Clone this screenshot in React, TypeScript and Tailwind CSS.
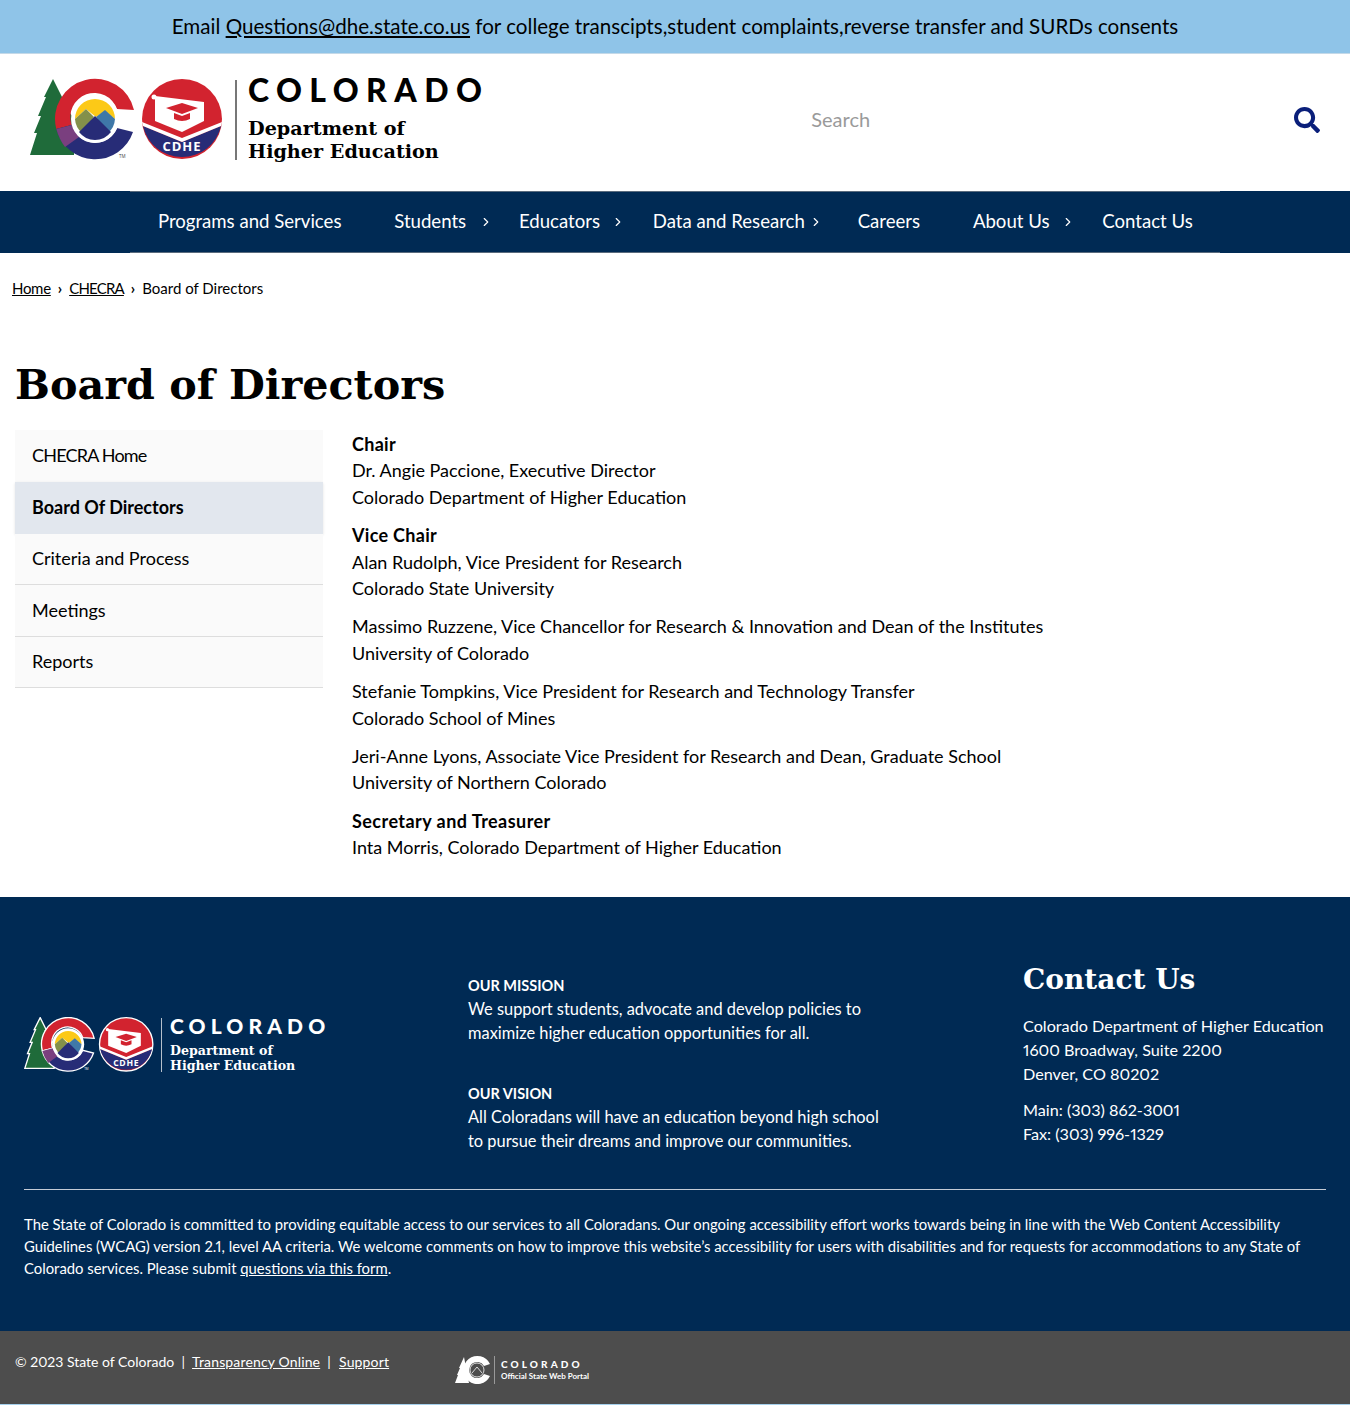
import { ChevronRight } from "lucide-react";
import { FaSearch } from "react-icons/fa";

const bodyFont = "font-['Lato',sans-serif]";
const slabFont = "font-['DejaVu_Serif',serif]";

const navItems = [
  { label: "Programs and Services", chevron: "" },
  { label: "Students", chevron: "right-0" },
  { label: "Educators", chevron: "right-[1px]" },
  { label: "Data and Research", chevron: "right-[8px]" },
  { label: "Careers", chevron: "" },
  { label: "About Us", chevron: "right-[1px]" },
  { label: "Contact Us", chevron: "" },
];

const sideItems = ["CHECRA Home", "Board Of Directors", "Criteria and Process", "Meetings", "Reports"];

// C + tree + CDHE seal, coordinates taken from the header logo
function LogoMark({ outline, className }: { outline?: boolean; className: string }) {
  const stroke = outline ? "#ffffff" : "none";
  const strokeWidth = outline ? 2 : 0;
  return (
    <svg viewBox="-1 -1 196 84" className={className} aria-hidden="true">
      <path
        d="M23 0 L33 20 L31 20 L44 40 L44 76 L0 76 L7 54 L4 54 L11 37 L8 37 L16 18 L14 18 Z"
        fill="#1f6b3a"
        stroke={stroke}
        strokeWidth={strokeWidth}
      />
      <path
        d="M104 31 A40 40 0 1 0 26.3 50 L41.7 46 A24 24 0 0 1 87 30 Z"
        fill="#d2232f"
        stroke={stroke}
        strokeWidth={strokeWidth}
      />
      <path
        d="M26.3 50 A40 40 0 0 0 103 53 L87 49 A24 24 0 0 1 41.7 46 Z"
        fill="#272c77"
        stroke={stroke}
        strokeWidth={strokeWidth}
      />
      <path d="M26.3 50 L41.7 46 L49 58 L35 68 Q29 60 26.3 50Z" fill="#7a3f7f" />
      <circle cx="65" cy="40" r="24" fill="#ffffff" />
      <path d="M45 40 A20 20 0 0 1 85 40 L75 32 L66 38 L56 30 Z" fill="#fcc917" />
      <path d="M45 40 L56 30 L64 38 L52 54 A20 20 0 0 1 45 40Z" fill="#84904a" />
      <path d="M85 40 L75 31 L66 38 L78 54 A20 20 0 0 0 85 40Z" fill="#3f78a8" />
      <path d="M65 37 L81 53 A20 20 0 0 1 49 53 Z" fill="#272c77" />
      <text x="89" y="79" fill={outline ? "#ffffff" : "#444444"} fontSize="4.5" fontFamily="'Open Sans',sans-serif">
        TM
      </text>
      <circle cx="152" cy="40" r="40" fill="#d2232f" stroke={stroke} strokeWidth={strokeWidth} />
      <path d="M113 47 L152 63 L191 47 A40 40 0 0 1 113 47Z" fill="#272c77" />
      <path d="M112 43 L152 59 L192 43 L191 47 L152 63 L113 47Z" fill="#ffffff" />
      <path d="M125 17 L174 23 L174 42 L152 53 L125 42 Z" fill="#ffffff" />
      <circle cx="124" cy="18" r="2.5" fill="#ffffff" />
      <path d="M136 29 L152 24 L168 29 L152 35 Z" fill="#d2232f" />
      <path d="M144 34 L152 37 L160 34 L160 40 Q152 44 144 40 Z" fill="#d2232f" />
      <text
        x="152"
        y="72"
        textAnchor="middle"
        fill="#ffffff"
        fontSize="13"
        fontWeight="700"
        fontFamily="'Open Sans',sans-serif"
        letterSpacing="1"
      >
        CDHE
      </text>
    </svg>
  );
}

function HeaderLogo() {
  return (
    <div className="flex items-center">
      <LogoMark className="h-[84px] w-[196px] shrink-0" />
      <div className="ml-[10px] h-[80px] w-[2px] bg-[#777777]" />
      <div className="ml-[11px] flex h-[84px] flex-col whitespace-nowrap text-black">
        <div className="font-['Lato',sans-serif] text-[32px] leading-[24px] font-black tracking-[7.4px]">COLORADO</div>
        <div className={`${slabFont} mt-[15px] text-[19.2px] leading-[23px] font-bold`}>
          Department of
          <br />
          Higher Education
        </div>
      </div>
    </div>
  );
}

function FooterLogo() {
  return (
    <div className="flex items-center text-white">
      <LogoMark outline className="h-[56px] w-[131px] shrink-0" />
      <div className="ml-[6px] h-[54px] w-px bg-[#b5bfcb]" />
      <div className="ml-[8px] flex flex-col whitespace-nowrap">
        <div className="font-['Lato',sans-serif] text-[21px] leading-[18px] font-black tracking-[5.1px]">COLORADO</div>
        <div className={`${slabFont} mt-[8px] text-[12.6px] leading-[15px] font-bold`}>
          Department of
          <br />
          Higher Education
        </div>
      </div>
    </div>
  );
}

function PortalLogo() {
  return (
    <div className="flex items-center text-white">
      <svg viewBox="0 0 36 30" className="h-[30px] w-[36px]" aria-hidden="true">
        <path d="M9 2 L14 28 L0 28 L3 20 L2 20 L5 13 L4 13 Z" fill="#ffffff" />
        <path d="M35 9 A14 14 0 1 0 35 21 L29 19 A8 8 0 1 1 29 11 Z" fill="#ffffff" />
        <circle cx="22" cy="15" r="7" fill="none" stroke="#ffffff" strokeWidth="0.8" />
        <path d="M17 18 L22 12 L27 18" fill="none" stroke="#ffffff" strokeWidth="0.8" />
      </svg>
      <div className="ml-[3px] h-[28px] w-px bg-[#999999]" />
      <div className="ml-[6px] flex flex-col whitespace-nowrap">
        <div className="font-['Lato',sans-serif] text-[10px] leading-[12px] font-black tracking-[3.1px]">COLORADO</div>
        <div className="mt-[1px] font-['Lato',sans-serif] text-[8px] leading-[11px] font-bold">
          Official State Web Portal
        </div>
      </div>
    </div>
  );
}

export default function App() {
  return (
    <div className={`${bodyFont} min-h-[1405px] bg-white text-black proportional-nums`}>
      <div className="flex h-[54px] items-center justify-center border-b border-[#c4d9e8] bg-[#8fc4e8] text-[20.6px]">
        <p>
          Email <a className="underline">Questions@dhe.state.co.us</a> for college transcipts,student complaints,reverse
          transfer and SURDs consents
        </p>
      </div>

      <header className="flex h-[137px] items-center pr-[30px] pb-[6px] pl-[29px]">
        <HeaderLogo />
        <div className="ml-[322px] flex flex-1 items-center justify-between">
          <span className="pb-[2px] text-[20px] text-[#9a9a9a]">Search</span>
          <FaSearch className="size-[26px] text-[#0a1f7a]" />
        </div>
      </header>

      <nav className="h-[62px] bg-[#002a54]">
        <ul className="mx-[130px] flex h-full border-y border-[#5a6b7d] pl-[1.5px]">
          {navItems.map((item) => (
            <li
              key={item.label}
              className="relative flex items-center px-[26.4px] text-[18.6px] whitespace-nowrap text-white"
            >
              {item.label}
              {item.chevron && <ChevronRight className={`absolute size-[14px] ${item.chevron}`} strokeWidth={2} />}
            </li>
          ))}
        </ul>
      </nav>

      <div className="flex gap-[7px] px-[12px] pt-[24px] text-[15px] leading-[22px]">
        <a className="tracking-[-0.3px] underline">Home</a>
        <span className="font-bold">›</span>
        <a className="tracking-[-0.8px] underline">CHECRA</a>
        <span className="font-bold">›</span>
        <span>Board of Directors</span>
      </div>

      <h1 className={`${slabFont} mt-[58px] pl-[15px] text-[41.3px] leading-[56px] font-bold`}>Board of Directors</h1>

      <div className="mt-[17px] flex pl-[15px]">
        <ul className="w-[308px] shrink-0 text-[18px]">
          {sideItems.map((item, i) => (
            <li
              key={item}
              className={
                item === "Board Of Directors"
                  ? "flex h-[52px] items-center bg-[#e2e7ee] pl-[17px] font-bold shadow-sm"
                  : i === 0
                    ? "flex h-[51.5px] items-center bg-[#fafafa] pl-[17px] tracking-[-0.8px]"
                    : "flex h-[51.5px] items-center border-b border-[#dddddd] bg-[#fafafa] pl-[17px]"
              }
            >
              {item}
            </li>
          ))}
        </ul>
        <div className="ml-[29px] flex flex-col gap-[12px] pt-[1px] text-[18px] leading-[26.4px]">
          <p>
            <b className="tracking-[0.3px]">Chair</b>
            <br />
            Dr. Angie Paccione, Executive Director
            <br />
            Colorado Department of Higher Education
          </p>
          <p>
            <b className="tracking-[0.3px]">Vice Chair</b>
            <br />
            Alan Rudolph, Vice President for Research
            <br />
            Colorado State University
          </p>
          <p>
            Massimo Ruzzene, Vice Chancellor for Research &amp; Innovation and Dean of the Institutes
            <br />
            University of Colorado
          </p>
          <p>
            Stefanie Tompkins, Vice President for Research and Technology Transfer
            <br />
            Colorado School of Mines
          </p>
          <p>
            Jeri-Anne Lyons, Associate Vice President for Research and Dean, Graduate School
            <br />
            University of Northern Colorado
          </p>
          <p>
            <b className="tracking-[0.45px]">Secretary and Treasurer</b>
            <br />
            Inta Morris, Colorado Department of Higher Education
          </p>
        </div>
      </div>

      <footer className="mt-[36px] h-[434px] bg-[#002a54] px-[24px] text-white">
        <div className="flex h-[293px] border-b border-[#c5ccd6]">
          <div className="mt-[120px] w-[444px] shrink-0 self-start">
            <FooterLogo />
          </div>
          <div className="mt-[76px] w-[555px] shrink-0 text-[16.4px] leading-[24px]">
            <p className="pt-[1px] text-[14.5px] leading-[23px] font-bold">OUR MISSION</p>
            <p>
              We support students, advocate and develop policies to
              <br />
              maximize higher education opportunities for all.
            </p>
            <p className="mt-[36px] pt-[1px] text-[14.5px] leading-[23px] font-bold">OUR VISION</p>
            <p>
              All Coloradans will have an education beyond high school
              <br />
              to pursue their dreams and improve our communities.
            </p>
          </div>
          <div className="mt-[63px] text-[16.2px] leading-[24px] whitespace-nowrap">
            <h2 className={`${slabFont} text-[28px] leading-[40px] font-bold`}>Contact Us</h2>
            <p className="mt-[14px]">
              Colorado Department of Higher Education
              <br />
              1600 Broadway, Suite 2200
              <br />
              Denver, CO 80202
            </p>
            <p className="mt-[12px]">
              Main: (303) 862-3001
              <br />
              Fax: (303) 996-1329
            </p>
          </div>
        </div>
        <p className="mt-[23px] text-[14.85px] leading-[22px]">
          The State of Colorado is committed to providing equitable access to our services to all Coloradans. Our ongoing
          accessibility effort works towards being in line with the Web Content Accessibility Guidelines (WCAG) version
          2.1, level AA criteria. We welcome comments on how to improve this website’s accessibility for users with
          disabilities and for requests for accommodations to any State of Colorado services. Please submit{" "}
          <a className="underline">questions via this form</a>.
        </p>
      </footer>

      <div className="flex h-[74px] border-b border-[#a5d0ec] bg-[#4d4d4d] pl-[15px] text-white">
        <p className="mt-[20px] w-[440px] text-[14px] leading-[22px]">
          © 2023 State of Colorado &nbsp;|&nbsp; <a className="tracking-[0.15px] underline">Transparency Online</a>{" "}
          &nbsp;|&nbsp; <a className="ml-[1px] tracking-[0.15px] underline">Support</a>
        </p>
        <div className="mt-[24px]">
          <PortalLogo />
        </div>
      </div>
    </div>
  );
}
